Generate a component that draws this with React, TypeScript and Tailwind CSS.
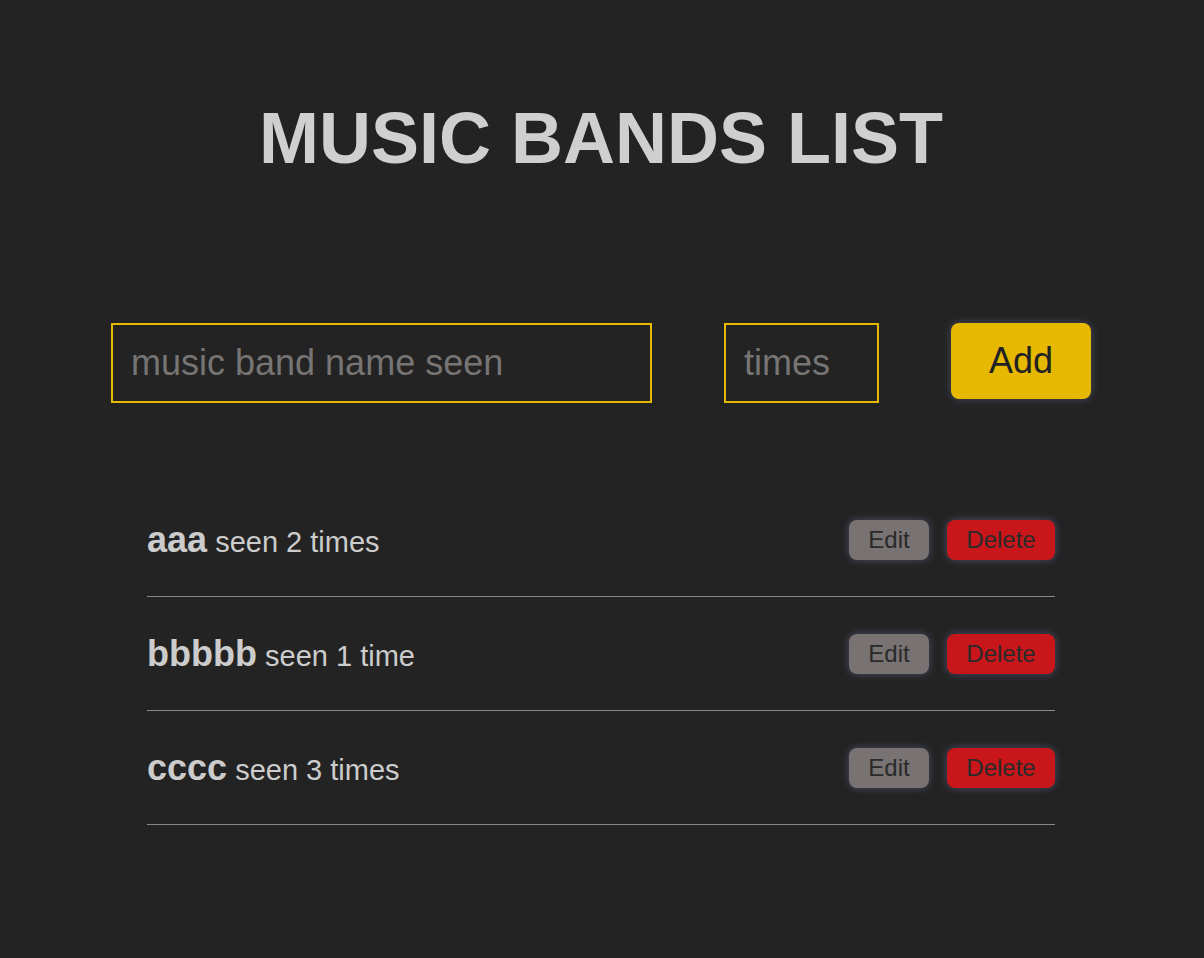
import { useState } from 'react';

type Band = { id: number; name: string; times: number };

const initial: Band[] = [
  { id: 1, name: 'aaa', times: 2 },
  { id: 2, name: 'bbbbb', times: 1 },
  { id: 3, name: 'cccc', times: 3 },
];

export default function App() {
  const [bands, setBands] = useState<Band[]>(initial);
  const [name, setName] = useState('');
  const [times, setTimes] = useState('');

  function add() {
    if (!name) return;
    setBands((b) => [...b, { id: Date.now(), name, times: Number(times) || 1 }]);
    setName('');
    setTimes('');
  }
  function remove(id: number) { setBands((b) => b.filter((x) => x.id !== id)); }

  return (
    <div className="min-h-screen bg-[#232323] text-[#cccccc] font-['Liberation_Sans',Arial,sans-serif] pt-[97px] pr-[2px]">
      <h1 className="text-center text-[72px] leading-[82px] font-bold text-[#cfcfcf]">MUSIC BANDS LIST</h1>

      <div className="mt-[144px] flex justify-center items-start gap-[72px]">
        <input
          value={name}
          onChange={(e) => setName(e.target.value)}
          placeholder="music band name seen"
          className="w-[541px] h-[80px] border-2 border-[#e6b800] bg-transparent px-[18px] text-[36px] text-[#cccccc] placeholder:text-[#777474] outline-none"
        />
        <input
          value={times}
          onChange={(e) => setTimes(e.target.value)}
          placeholder="times"
          className="w-[155px] h-[80px] border-2 border-[#e6b800] bg-transparent px-[18px] text-[36px] text-[#cccccc] placeholder:text-[#777474] outline-none"
        />
        <button
          onClick={add}
          className="w-[140px] h-[76px] rounded-lg bg-[#e6b800] text-[36px] text-[#222222] shadow-[0_0_8px_rgba(110,110,160,0.5)]"
        >
          Add
        </button>
      </div>

      <ul className="mt-[80px] mx-auto w-[908px]">
        {bands.map((b) => (
          <li key={b.id} className="flex items-center justify-between h-[114px] pt-[1px] border-b border-[#8a8a8a]">
            <div className="text-[29px] leading-none">
              <span className="text-[36px] font-bold">{b.name}</span> seen {b.times} {b.times === 1 ? 'time' : 'times'}
            </div>
            <div className="flex gap-[18px]">
              <button className="w-[80px] h-[40px] rounded-lg bg-[#787272] text-[24px] text-[#2a2a2a] shadow-[0_0_8px_rgba(110,110,160,0.55)]">
                Edit
              </button>
              <button
                onClick={() => remove(b.id)}
                className="w-[108px] h-[40px] rounded-lg bg-[#c8161a] text-[24px] text-[#2a2a2a] shadow-[0_0_8px_rgba(110,110,160,0.55)]"
              >
                Delete
              </button>
            </div>
          </li>
        ))}
      </ul>
    </div>
  );
}
